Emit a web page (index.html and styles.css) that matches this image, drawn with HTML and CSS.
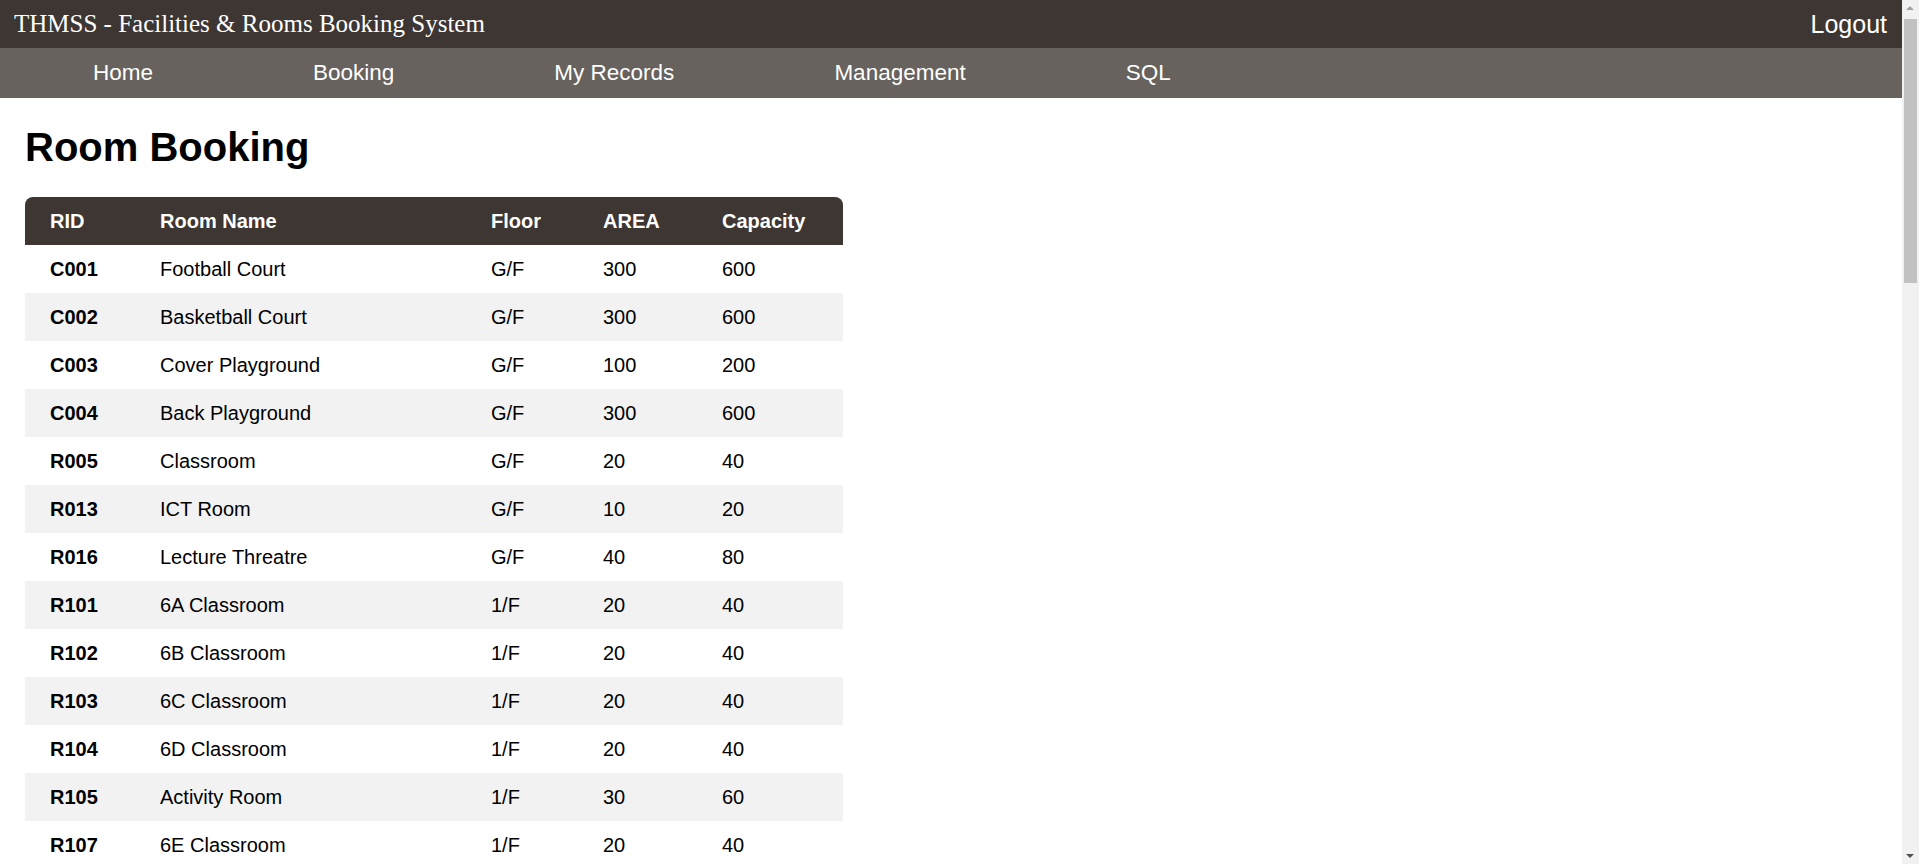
FILE: index.html
```html
<!DOCTYPE html>
<html lang="en">
<head>
<meta charset="utf-8">
<title>THMSS - Facilities &amp; Rooms Booking System</title>
<link rel="stylesheet" href="styles.css">
</head>
<body>
<header class="topbar">
  <div class="site-title">THMSS - Facilities &amp; Rooms Booking System</div>
  <a class="logout" href="#">Logout</a>
</header>
<nav class="mainnav">
  <a href="#">Home</a>
  <a href="#">Booking</a>
  <a href="#">My Records</a>
  <a href="#">Management</a>
  <a href="#">SQL</a>
</nav>
<main class="content">
  <h1 class="page-title">Room Booking</h1>
  <table class="rooms">
    <colgroup>
      <col class="c-rid"><col class="c-name"><col class="c-floor"><col class="c-area"><col class="c-cap">
    </colgroup>
    <thead>
      <tr><th>RID</th><th>Room Name</th><th>Floor</th><th>AREA</th><th>Capacity</th></tr>
    </thead>
    <tbody>
      <tr><td class="rid">C001</td><td>Football Court</td><td>G/F</td><td>300</td><td>600</td></tr>
      <tr><td class="rid">C002</td><td>Basketball Court</td><td>G/F</td><td>300</td><td>600</td></tr>
      <tr><td class="rid">C003</td><td>Cover Playground</td><td>G/F</td><td>100</td><td>200</td></tr>
      <tr><td class="rid">C004</td><td>Back Playground</td><td>G/F</td><td>300</td><td>600</td></tr>
      <tr><td class="rid">R005</td><td>Classroom</td><td>G/F</td><td>20</td><td>40</td></tr>
      <tr><td class="rid">R013</td><td>ICT Room</td><td>G/F</td><td>10</td><td>20</td></tr>
      <tr><td class="rid">R016</td><td>Lecture Threatre</td><td>G/F</td><td>40</td><td>80</td></tr>
      <tr><td class="rid">R101</td><td>6A Classroom</td><td>1/F</td><td>20</td><td>40</td></tr>
      <tr><td class="rid">R102</td><td>6B Classroom</td><td>1/F</td><td>20</td><td>40</td></tr>
      <tr><td class="rid">R103</td><td>6C Classroom</td><td>1/F</td><td>20</td><td>40</td></tr>
      <tr><td class="rid">R104</td><td>6D Classroom</td><td>1/F</td><td>20</td><td>40</td></tr>
      <tr><td class="rid">R105</td><td>Activity Room</td><td>1/F</td><td>30</td><td>60</td></tr>
      <tr><td class="rid">R107</td><td>6E Classroom</td><td>1/F</td><td>20</td><td>40</td></tr>
    </tbody>
  </table>
</main>
<div class="fake-scrollbar" aria-hidden="true">
  <div class="sb-arrow sb-up"></div>
  <div class="sb-track"><div class="sb-thumb"></div></div>
  <div class="sb-arrow sb-down"></div>
</div>
</body>
</html>
```

FILE: styles.css
```css
html, body {
  margin: 0;
  padding: 0;
}

body {
  font-family: "Liberation Sans", Arial, sans-serif;
  color: #000;
  background: #fff;
  margin-right: 17px;
}

.topbar {
  display: flex;
  justify-content: space-between;
  align-items: center;
  height: 48px;
  padding: 0 15px 0 14px;
  background: #3d3632;
  color: #fff;
}

.site-title {
  font-family: "Liberation Serif", "Times New Roman", serif;
  font-size: 25px;
}

.logout {
  color: #fff;
  text-decoration: none;
  font-size: 25px;
}

.mainnav {
  display: flex;
  height: 50px;
  padding-left: 13px;
  background: #67625d;
}

.mainnav a {
  display: block;
  padding: 0 80px;
  line-height: 50px;
  font-size: 22.5px;
  color: #fff;
  text-decoration: none;
}

.content {
  padding: 0 25px;
  min-height: 2600px;
}

.page-title {
  margin: 26px 0 27px;
  font-size: 40px;
  line-height: 46px;
  font-weight: bold;
}

.rooms {
  table-layout: fixed;
  width: 818px;
  border-collapse: separate;
  border-spacing: 0;
  font-size: 20px;
}

.c-rid { width: 110px; }
.c-name { width: 331px; }
.c-floor { width: 112px; }
.c-area { width: 119px; }
.c-cap { width: 146px; }

.rooms th,
.rooms td {
  height: 48px;
  padding: 0 0 0 25px;
  text-align: left;
  vertical-align: middle;
}

.rooms th {
  background: #3d3632;
  color: #fff;
  font-weight: bold;
}

.rooms th:first-child {
  border-top-left-radius: 8px;
}

.rooms th:last-child {
  border-top-right-radius: 8px;
}

.rooms tbody tr:nth-child(even) td {
  background: #f2f2f2;
}

.rooms td.rid {
  font-weight: bold;
}

/* browser scrollbar drawn over the right edge */
.fake-scrollbar {
  position: fixed;
  top: 0;
  right: 0;
  width: 17px;
  height: 100vh;
  display: flex;
  flex-direction: column;
  background: #f1f1f1;
}

.sb-arrow {
  height: 17px;
  flex: none;
  position: relative;
}

.sb-arrow::after {
  content: "";
  position: absolute;
  left: 4px;
  width: 0;
  height: 0;
  border-left: 4px solid transparent;
  border-right: 4px solid transparent;
}

.sb-up::after {
  top: 6px;
  border-bottom: 4px solid #a3a3a3;
}

.sb-down::after {
  top: 7px;
  border-top: 4px solid #505050;
}

.sb-track {
  flex: 1;
  padding: 2px 2px 0;
}

.sb-thumb {
  height: 264px;
  background: #c1c1c1;
}
```
